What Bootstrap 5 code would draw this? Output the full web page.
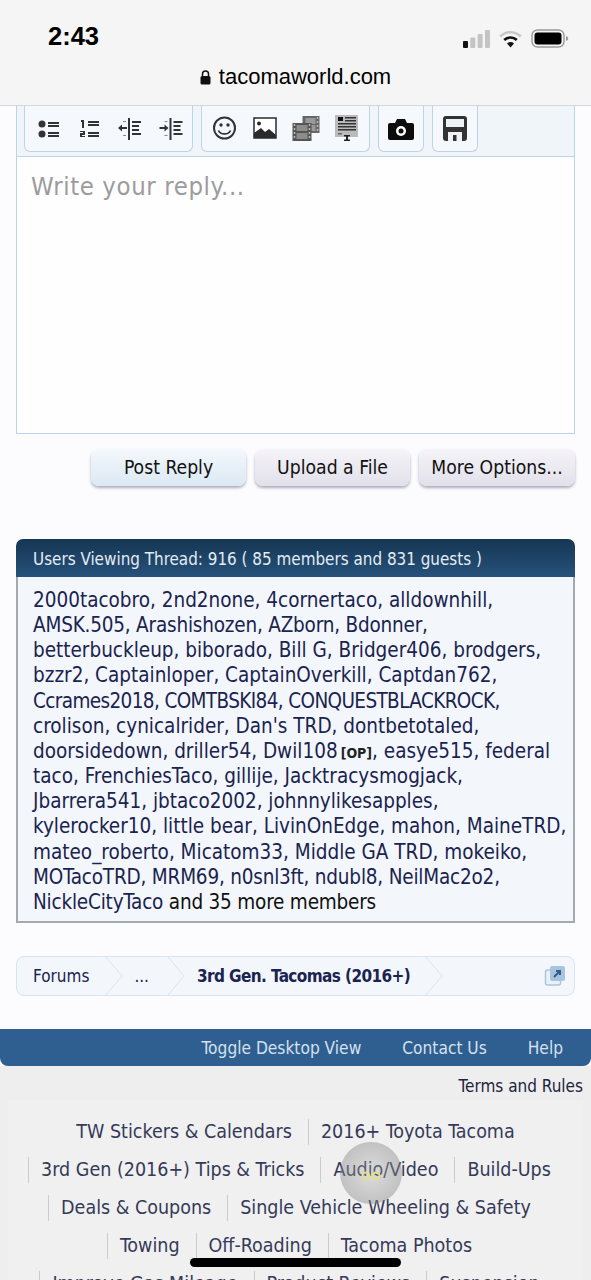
<!DOCTYPE html>
<html lang="en">
<head>
    <meta charset="UTF-8">
    <title>Users Viewing Thread</title>
    <link href="https://cdn.jsdelivr.net/npm/bootstrap@5.3.0/dist/css/bootstrap.min.css" rel="stylesheet">
    <style>
        html, body { height: 1280px; overflow: hidden; }
        body { background: #fcfcff; font-family: "DejaVu Sans Condensed", "DejaVu Sans", sans-serif; color: #1b2350; position: relative; }
        .ios-bar { height: 106px; background: #f5f5f5; border-bottom: 1px solid #d4d8dc; font-family: "Liberation Sans", sans-serif; color: #000; }
        .ios-time { font-size: 25.5px; font-weight: 700; padding: 22px 0 0 48px; line-height: 28px; }
        .ios-icons { padding: 27px 22px 0 0; gap: 9px; }
        .ios-url { font-size: 22px; line-height: 26px; margin-top: 14px; }
        .editor-box { margin: 0 16px; border: solid #bcd4e8; border-width: 0 1px 1px; }
        .tool-strip { height: 51px; background: #f0f5fa; border-bottom: 1px solid #bcd4e8; padding-left: 7px; gap: 8px; }
        .tool-group { height: 46px; border: 1px solid #bcd4e8; border-top: 0; border-radius: 0 0 6px 6px; background: #f5f9fd; padding: 0 3.5px; }
        .tool-single { padding: 0 2px; }
        .tool-group svg { display: block; }
        .reply-area { height: 276px; background: #fefeff; color: #9c9c9c; font-size: 25.5px; letter-spacing: .6px; padding: 11px 14px; line-height: 36px; }
        .btn-row { margin: 15px 16px 0; gap: 9px; height: 37px; }
        .fake-btn { height: 37px; border-radius: 8px; background: linear-gradient(#f5f4f8, #e2e0ea); color: #111; font-size: 19.2px; line-height: 37px; text-align: center; box-shadow: 0 2px 3px #a9aeba; }
        .btn-post { width: 155px; background: linear-gradient(#f4f8fc, #dbe8f3); }
        .btn-upload { width: 155px; }
        .btn-more { width: 156px; }
        .viewers { margin: 53px 16px 0; }
        .viewers-head { height: 38px; background: linear-gradient(#163653, #26527b); border-radius: 7px 7px 0 0; color: #e4ecf4; font-size: 16.9px; line-height: 40px; padding-left: 17px; }
        .viewers-body { height: 346px; background: #f3f7fb; border: 2px solid #a3a9af; border-top: 0; padding: 11px 15px; font-size: 20.5px; line-height: 25.15px; white-space: nowrap; }
        .viewers-body .more { color: #111; }
        .op-tag { font-size: 14px; line-height: 1; font-weight: 700; color: #222; margin-left: 3px; }
        .line-tight { letter-spacing: -.2px; }
        .line-caps { letter-spacing: -.62px; }
        .crumbs { margin: 33px 16px 0; height: 40px; background: #f3f7fb; border: 1px solid #d8e4ef; border-radius: 8px; font-size: 17px; overflow: hidden; }
        .crumb { height: 38px; line-height: 39px; }
        .crumb-arrow { flex: none; display: block; }
        .crumb-dots { margin-left: 11px; margin-right: 18px; }
        .crumb-current { font-weight: 700; letter-spacing: -.6px; margin-left: 12px; margin-right: 15px; }
        .site-bar { margin-top: 33px; height: 37px; background: #2f5f90; border-radius: 0 0 8px 8px; color: #d5e1ee; font-size: 17.2px; line-height: 39px; padding-right: 28px; gap: 41px; }
        .lower { background: #eee; height: 300px; }
        .terms { text-align: right; font-size: 17px; line-height: 24px; padding: 8px 8px 0 0; color: #1d2440; }
        .tag-block { margin: 2px 8px 0; background: #f0f0f0; padding: 13px 0 0 4px; }
        .tag-line { height: 38px; font-size: 19.5px; color: #353a58; white-space: nowrap; }
        .tag-item { border-left: 1px solid #ccc; padding: 0 16px 0 12px; height: 26px; line-height: 25px; margin-top: 6px; }
        .tag-plain { border-left: 0; }
        .touch-dot { position: absolute; left: 340px; top: 1142px; width: 62px; height: 62px; border-radius: 50%; background: radial-gradient(rgba(175,175,175,.3), rgba(125,125,125,.5)); }
        .touch-dot svg { display: block; margin: 29px auto 0; }
        .home-bar { position: absolute; left: 190px; top: 1258px; width: 211px; height: 9px; border-radius: 5px; background: #000; }
    </style>
</head>
<body>

<div class="ios-bar">
    <div class="d-flex justify-content-between">
        <div class="ios-time">2:43</div>
        <div class="ios-icons d-flex align-items-center">
            <svg width="27" height="18" viewBox="0 0 27 18"><rect x="0" y="11" width="5" height="7" rx="1" fill="#111"/><rect x="7.300" y="7.500" width="5" height="10.500" rx="1" fill="#c4c4c4"/><rect x="14.600" y="4" width="5" height="14" rx="1" fill="#c4c4c4"/><rect x="22" y="0" width="5" height="18" rx="1" fill="#c4c4c4"/></svg>
            <svg width="23" height="18" viewBox="0 0 23 18"><path d="M1.200 6.500a14.500 14.500 0 0 1 20.600 0" fill="none" stroke="#c8c8c8" stroke-width="2.600"/><path d="M5.200 10a9 9 0 0 1 12.600 0" fill="none" stroke="#111" stroke-width="2.600"/><path d="M8 13.400a5 5 0 0 1 7 0l-3.500 4z" fill="#111"/></svg>
            <svg width="38" height="19" viewBox="0 0 38 19"><rect x="1" y="1" width="32" height="17" rx="5.500" fill="none" stroke="#999" stroke-width="1.400"/><rect x="3.500" y="3.500" width="27" height="12" rx="3" fill="#000"/><path d="M35 7c1.500.4 2.200 1.400 2.200 2.500s-.7 2.100-2.200 2.500z" fill="#999"/></svg>
        </div>
    </div>
    <div class="ios-url d-flex justify-content-center align-items-center gap-2">
        <svg width="11" height="15" viewBox="0 0 11 15"><path d="M2.500 6V4a3 3 0 0 1 6 0v2" fill="none" stroke="#111" stroke-width="1.500"/><rect x="0.500" y="6" width="10" height="8.500" rx="1.500" fill="#111"/></svg>
        <span>tacomaworld.com</span>
    </div>
</div>

<div class="editor-box">
    <div class="tool-strip d-flex">
        <div class="tool-group d-flex align-items-center">
            <svg width="40" height="30" viewBox="-2 0 40 30"><g fill="#333"><circle cx="11" cy="10" r="3.500"/><circle cx="11" cy="20" r="3.500"/><rect x="17" y="8" width="11" height="2"/><rect x="17" y="11" width="11" height="2"/><rect x="17" y="18" width="11" height="2"/><rect x="17" y="21" width="11" height="2"/></g></svg>
            <svg width="40" height="30" viewBox="0 0 40 30"><g fill="#333"><path d="M12 6h3v8h-2V8h-1z"/><path d="M11 17h5v4h-3v1h3v1h-5v-4h3v-1h-3z"/><rect x="19" y="7" width="11" height="2"/><rect x="19" y="10" width="11" height="2"/><rect x="19" y="18" width="11" height="2"/><rect x="19" y="21" width="11" height="2"/></g></svg>
            <svg width="40" height="30" viewBox="0 0 40 30"><g fill="#333"><rect x="19" y="4" width="2" height="22"/><rect x="23" y="7" width="9" height="2"/><rect x="23" y="11" width="7" height="2"/><rect x="23" y="15" width="7" height="2"/><rect x="23" y="19" width="9" height="2"/><path d="M9 14l4-3.500v2.500h5v2h-5v2.500z"/><rect x="14" y="7" width="3" height="1" fill="#888"/><rect x="14" y="21" width="3" height="1" fill="#888"/></g></svg>
            <svg width="40" height="30" viewBox="-1.500 0 40 30"><g fill="#333"><rect x="19" y="4" width="2" height="22"/><rect x="23" y="7" width="9" height="2"/><rect x="23" y="11" width="7" height="2"/><rect x="23" y="15" width="7" height="2"/><rect x="23" y="19" width="9" height="2"/><path d="M18 14l-4-3.500v2.500h-5v2h5v2.500z"/><rect x="14" y="7" width="3" height="1" fill="#888"/><rect x="14" y="21" width="3" height="1" fill="#888"/></g></svg>
        </div>
        <div class="tool-group d-flex align-items-center">
            <svg width="40" height="30" viewBox="1.500 0 40 30"><circle cx="20" cy="14" r="10.500" fill="none" stroke="#333" stroke-width="2"/><circle cx="16.500" cy="11" r="1.700" fill="#333"/><circle cx="23.500" cy="11" r="1.700" fill="#333"/><path d="M14 16.500c2 4.500 10 4.500 12 0" fill="none" stroke="#333" stroke-width="1.800"/></svg>
            <svg width="40" height="30" viewBox="2 0 40 30"><rect x="10" y="4" width="22" height="20" fill="#fff" stroke="#2a2a2a" stroke-width="1.500"/><circle cx="15" cy="9.500" r="2" fill="#2a2a2a"/><path d="M10 24v-5l7-5 4 4 4-3 7 6v3z" fill="#2a2a2a"/></svg>
            <svg width="40" height="30" viewBox="1.500 0 40 30"><rect x="18" y="2" width="17" height="17" fill="#666"/><rect x="21" y="4" width="10" height="6" fill="#999"/><rect x="21" y="11" width="10" height="6" fill="#999"/><rect x="8" y="9" width="19" height="18" fill="#555"/><rect x="12" y="11" width="11" height="6" fill="#8c8c8c"/><rect x="12" y="19" width="11" height="6" fill="#8c8c8c"/><path d="M10 10v16M25 10v16M33 3v15" stroke="#bbb" stroke-width="1.500" stroke-dasharray="2 2" fill="none"/></svg>
            <svg width="40" height="30" viewBox="0 0 40 30"><rect x="9" y="1" width="23" height="22" fill="#bbb"/><rect x="12" y="3" width="5" height="4" fill="#111"/><g fill="#333"><rect x="19" y="3" width="11" height="1.500"/><rect x="19" y="6" width="11" height="1.500"/><rect x="12" y="9" width="18" height="1.500"/><rect x="12" y="12" width="18" height="1.500"/><rect x="12" y="15" width="18" height="1.500"/></g><rect x="12" y="19" width="4" height="1.500" fill="#666"/><path d="M18 21h6v1.500h-2v3h2V27h-6v-1.500h2v-3h-2z" fill="#222"/></svg>
        </div>
        <div class="tool-group tool-single d-flex align-items-center">
            <svg width="40" height="30" viewBox="0 0 40 30"><path d="M9 9h5l2-4h8l2 4h5a2 2 0 0 1 2 2v13a2 2 0 0 1-2 2H9a2 2 0 0 1-2-2V11a2 2 0 0 1 2-2z" fill="#0c0c0c"/><circle cx="20" cy="17" r="5" fill="#fff"/><circle cx="20" cy="17" r="2.500" fill="#0c0c0c"/></svg>
        </div>
        <div class="tool-group tool-single d-flex align-items-center">
            <svg width="40" height="30" viewBox="0 0 40 30"><path d="M11 2h18a3 3 0 0 1 3 3v19a3 3 0 0 1-3 3H11a3 3 0 0 1-3-3V5a3 3 0 0 1 3-3z" fill="#333"/><rect x="11" y="5" width="18" height="8" fill="#eef2f6"/><rect x="13" y="18" width="14" height="9" fill="#eef2f6"/><rect x="18" y="21" width="3.500" height="6" fill="#333"/></svg>
        </div>
    </div>
    <div class="reply-area">Write your reply...</div>
</div>

<div class="btn-row d-flex justify-content-end">
    <div class="fake-btn btn-post">Post Reply</div>
    <div class="fake-btn btn-upload">Upload a File</div>
    <div class="fake-btn btn-more">More Options...</div>
</div>

<div class="viewers">
    <div class="viewers-head">Users Viewing Thread: 916 ( 85 members and 831 guests )</div>
    <div class="viewers-body">
        2000tacobro, 2nd2none, 4cornertaco, alldownhill,<br>
        <span class="line-tight">AMSK.505, Arashishozen, AZborn, Bdonner,</span><br>
        betterbuckleup, biborado, Bill G, Bridger406, brodgers,<br>
        bzzr2, Captainloper, CaptainOverkill, Captdan762,<br>
        <span class="line-caps">Ccrames2018, COMTBSKI84, CONQUESTBLACKROCK,</span><br>
        crolison, cynicalrider, Dan's TRD, dontbetotaled,<br>
        doorsidedown, driller54, Dwil108<span class="op-tag">[OP]</span>, easye515, federal<br>
        taco, FrenchiesTaco, gillije, Jacktracysmogjack,<br>
        Jbarrera541, jbtaco2002, johnnylikesapples,<br>
        kylerocker10, little bear, LivinOnEdge, mahon, MaineTRD,<br>
        mateo_roberto, Micatom33, Middle GA TRD, mokeiko,<br>
        <span class="line-tight">MOTacoTRD, MRM69, n0snl3ft, ndubl8, NeilMac2o2,</span><br>
        <span class="line-tight">NickleCityTaco <span class="more">and 35 more members</span></span>
    </div>
</div>

<div class="crumbs d-flex align-items-center">
    <div class="crumb ps-3">Forums</div>
    <svg class="crumb-arrow ms-3" width="18" height="38" viewBox="0 0 18 38"><path d="M1 0l16 19L1 38" fill="none" stroke="#d8e4ef"/></svg>
    <div class="crumb crumb-dots">...</div>
    <svg class="crumb-arrow" width="18" height="38" viewBox="0 0 18 38"><path d="M1 0l16 19L1 38" fill="none" stroke="#d8e4ef"/></svg>
    <div class="crumb crumb-current">3rd Gen. Tacomas (2016+)</div>
    <svg class="crumb-arrow" width="18" height="38" viewBox="0 0 18 38"><path d="M1 0l16 19L1 38" fill="none" stroke="#d8e4ef"/></svg>
    <svg class="ms-auto me-2" width="22" height="22" viewBox="0 0 22 22"><rect x="1.500" y="5" width="15" height="15" rx="2" fill="#eaf1f8" stroke="#a9c5de" stroke-width="1.500"/><rect x="6" y="1" width="15" height="15" rx="2" fill="#a9c5de"/><path d="M10 12l6-6m-4 0h4v4" fill="none" stroke="#2f5f90" stroke-width="2"/></svg>
</div>

<div class="site-bar d-flex justify-content-end">
    <span>Toggle Desktop View</span>
    <span>Contact Us</span>
    <span>Help</span>
</div>

<div class="lower">
    <div class="terms">Terms and Rules</div>
    <div class="tag-block">
        <div class="tag-line d-flex justify-content-center"><span class="tag-item tag-plain">TW Stickers &amp; Calendars</span><span class="tag-item">2016+ Toyota Tacoma</span></div>
        <div class="tag-line d-flex justify-content-center"><span class="tag-item">3rd Gen (2016+) Tips &amp; Tricks</span><span class="tag-item">Audio/Video</span><span class="tag-item">Build-Ups</span></div>
        <div class="tag-line d-flex justify-content-center"><span class="tag-item">Deals &amp; Coupons</span><span class="tag-item">Single Vehicle Wheeling &amp; Safety</span></div>
        <div class="tag-line d-flex justify-content-center"><span class="tag-item">Towing</span><span class="tag-item">Off-Roading</span><span class="tag-item">Tacoma Photos</span></div>
        <div class="tag-line d-flex justify-content-center"><span class="tag-item">Improve Gas Mileage</span><span class="tag-item">Product Reviews</span><span class="tag-item">Suspension</span></div>
    </div>
</div>

<div class="touch-dot">
    <svg width="20" height="10" viewBox="0 0 20 10"><circle cx="5" cy="5" r="3.500" fill="none" stroke="#e3df8a" stroke-width="2"/><circle cx="15" cy="5" r="3.500" fill="none" stroke="#e3df8a" stroke-width="2"/></svg>
</div>
<div class="home-bar"></div>

<script src="https://cdn.jsdelivr.net/npm/bootstrap@5.3.0/dist/js/bootstrap.bundle.min.js"></script>
</body>
</html>
